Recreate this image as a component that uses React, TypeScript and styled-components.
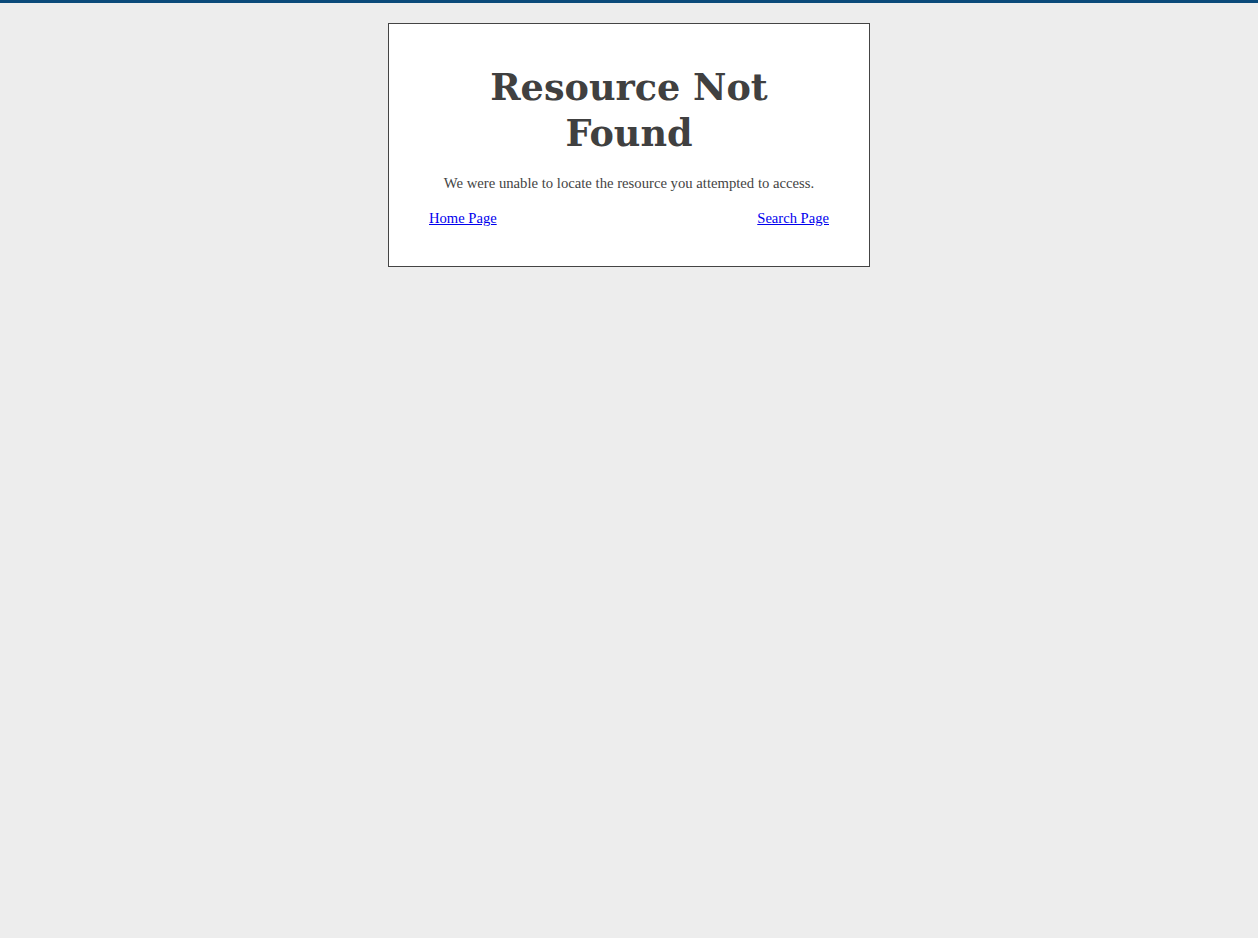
import styled, { createGlobalStyle } from "styled-components";

const GlobalStyle = createGlobalStyle`
    html, body {
        margin: 0;
        padding: 0;
    }

    body {
        background-color: #ededed;
        border-top: 3px solid #0b4a7a;
        min-height: 935px;
        font-family: "Liberation Serif", Georgia, serif;
        color: #444;
    }
`;

const Page = styled.div`
    display: flex;
    justify-content: center;
    padding-top: 20px;
`;

const Box = styled.div`
    width: 400px;
    background-color: #fff;
    border: 1px solid #444;
    padding: 41px 40px 39px 40px;
    display: flex;
    flex-direction: column;
`;

const Title = styled.h1`
    margin: 0;
    text-align: center;
    font-family: "DejaVu Serif", Georgia, serif;
    font-size: 36.6px;
    line-height: 46px;
    font-weight: bold;
    color: #404040;
`;

const Message = styled.p`
    margin: 17px 0 0 0;
    text-align: center;
    font-size: 14.7px;
    line-height: 18px;
`;

const Links = styled.div`
    display: flex;
    justify-content: space-between;
    margin-top: 17px;
    font-size: 14.6px;
    line-height: 18px;
`;

const Link = styled.a`
    color: #0000ee;
    text-decoration: underline;
`;

const App = () => {
    return <>
        <GlobalStyle />
        <Page>
            <Box>
                <Title>Resource Not Found</Title>
                <Message>We were unable to locate the resource you attempted to access.</Message>
                <Links>
                    <Link href="#">Home Page</Link>
                    <Link href="#">Search Page</Link>
                </Links>
            </Box>
        </Page>
    </>;
};

export default App;
